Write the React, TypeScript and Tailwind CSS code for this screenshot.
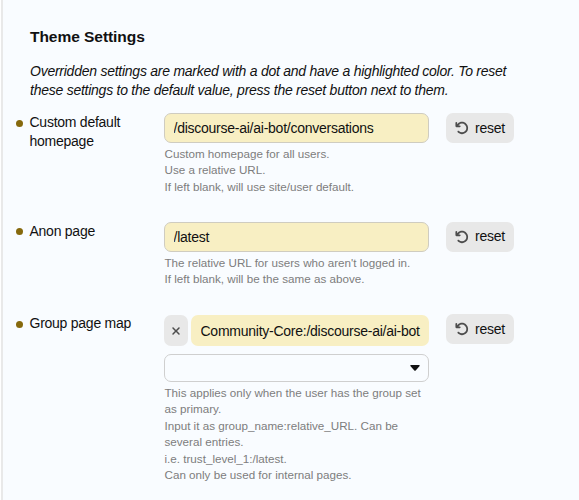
import { FaArrowRotateLeft, FaXmark } from 'react-icons/fa6';

interface SettingRowProps {
  label: React.ReactNode;
  description: string[];
  className: string;
  children: React.ReactNode;
}

function SettingRow({ label, description, className, children }: SettingRowProps) {
  return (
    <section className={`flex items-start ${className}`}>
      <span className="mt-[6.5px] mr-[6.5px] size-[7px] shrink-0 rounded-full bg-[#86690d]" />
      <h3 className="w-[134.5px] shrink-0 leading-[18.5px]">{label}</h3>
      <div className="w-[265px] shrink-0">
        {children}
        <div className="mt-[3px] pl-[0.5px] text-[11.65px] leading-[16.4px] tracking-normal text-[#7d7d7d]">
          {description.map((line) => (
            <p key={line} className="whitespace-nowrap">{line}</p>
          ))}
        </div>
      </div>
      <button className="ml-[17px] flex h-[30px] w-[68px] shrink-0 items-center rounded-[7px] bg-[#e8e8e8] pl-[9px]">
        <FaArrowRotateLeft className="mr-[6px] size-[14px] text-[#4d4d4d]" />
        reset
      </button>
    </section>
  );
}

function TextValue({ value }: { value: string }) {
  return (
    <input
      readOnly
      value={value}
      className="block h-[30px] w-full rounded-[7px] border border-[#cfccc0] bg-[#f8efc3] px-[8.5px] outline-none"
    />
  );
}

export default function App() {
  return (
    <div className="h-[500px] overflow-hidden bg-white pl-px font-['Liberation_Sans',Arial,sans-serif] text-[14px] tracking-[-0.25px] text-[#111]">
      <main className="h-full border-l-2 border-[#e9e9e9] bg-[#f9fcff] pl-[13px]">
        <h2 className="pt-[27px] pl-[14px] text-[15.55px] leading-[20px] font-bold tracking-[-0.07px]">Theme Settings</h2>
        <p className="mt-[15px] pl-[14px] leading-[18.5px] whitespace-nowrap italic">
          Overridden settings are marked with a dot and have a highlighted color. To reset
          <br />
          these settings to the default value, press the reset button next to them.
        </p>

        <SettingRow
          className="mt-[14px] h-[108.5px]"
          label={<>Custom default<br />homepage</>}
          description={['Custom homepage for all users.', 'Use a relative URL.', 'If left blank, will use site/user default.']}
        >
          <TextValue value="/discourse-ai/ai-bot/conversations" />
        </SettingRow>

        <SettingRow
          className="h-[92.5px]"
          label="Anon page"
          description={["The relative URL for users who aren't logged in.", 'If left blank, will be the same as above.']}
        >
          <TextValue value="/latest" />
        </SettingRow>

        <SettingRow
          className=""
          label="Group page map"
          description={[
            'This applies only when the user has the group set',
            'as primary.',
            'Input it as group_name:relative_URL. Can be',
            'several entries.',
            'i.e. trust_level_1:/latest.',
            'Can only be used for internal pages.',
          ]}
        >
          <div className="mt-px flex gap-[3px]">
            <button className="flex h-[31px] w-6 shrink-0 items-center justify-center rounded-[7px] bg-[#e8e8e8]">
              <FaXmark className="size-[12px] text-[#4d4d4d]" />
            </button>
            <input
              readOnly
              value="Community-Core:/discourse-ai/ai-bot"
              className="h-[31px] w-[238px] rounded-[7px] bg-[#f8efc3] pl-[9.5px] outline-none"
            />
          </div>
          <button className="mt-[8px] flex h-[28px] w-full items-center justify-end rounded-[7px] border border-[#cfcfcf] pr-[8px]">
            <svg viewBox="0 0 10 6" className="h-[6px] w-[10px]">
              <path d="M1 0h8q1 .2.6 1L5.7 5.5q-.7.6-1.4 0L.4 1Q0 .2 1 0Z" fill="#111" />
            </svg>
          </button>
        </SettingRow>
      </main>
    </div>
  );
}
